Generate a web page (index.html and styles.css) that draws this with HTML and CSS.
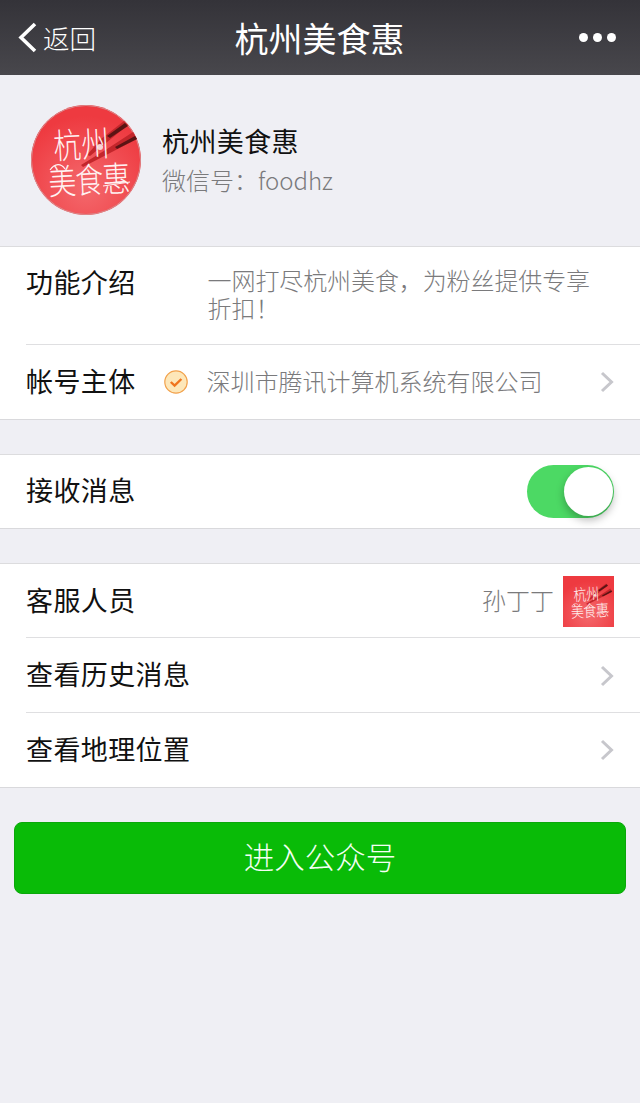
FILE: index.html
```html
<!DOCTYPE html>
<html lang="zh">
<head>
<meta charset="utf-8">
<title>杭州美食惠</title>
<link rel="stylesheet" href="styles.css">
</head>
<body>
<svg class="defs" width="0" height="0" aria-hidden="true">
  <defs>
    <radialGradient id="logoBg" cx="50%" cy="75%" r="65%">
      <stop offset="0" stop-color="#f4696d"/>
      <stop offset="1" stop-color="#ee3a40"/>
    </radialGradient>
    <symbol id="logoArt" viewBox="0 0 110 110">
      <path d="M97 20 L93 16 L70 34 L56 50 L59 51Z" fill="#c3262b"/>
      <path d="M106 34 L102 27 L76 44 L50 60 L52 62Z" fill="#c3262b"/>
      <path d="M97 21 L94 18 L76 31 L79 33Z" fill="#5a1414"/>
      <path d="M106 34 L104 31 L84 42 L86 44Z" fill="#5a1414"/>
      <circle cx="69" cy="42" r="3" fill="#f7d4d4"/>
      <text transform="translate(23 54) rotate(-3) scale(1 1.25)" class="logo-text logo-a">杭州</text>
      <text transform="translate(18 90) rotate(-3) scale(1 1.25)" class="logo-text logo-b">美食惠</text>
      <path d="M72 81 L99 77" class="logo-stroke"/>
      <path d="M19 65 C24 58 30 58 34 64" class="logo-stroke"/>
    </symbol>
  </defs>
</svg>
<header class="nav">
  <div class="nav-back">
    <svg class="back-icon" viewBox="0 0 20 32"><path d="M17 2 L3 15.5 L17 29" fill="none" stroke="#fff" stroke-width="3.6"/></svg>
    <span>返回</span>
  </div>
  <h1 class="nav-title">杭州美食惠</h1>
  <div class="nav-more"><i></i><i></i><i></i></div>
</header>
<section class="profile">
  <svg class="avatar" viewBox="0 0 110 110">
    <circle cx="55" cy="55" r="55" fill="url(#logoBg)"/>
    <circle cx="55" cy="55" r="54.5" fill="none" stroke="#d9898b" stroke-width="1"/>
    <use href="#logoArt" width="110" height="110"/>
  </svg>
  <div class="profile-text">
    <div class="profile-name">杭州美食惠</div>
    <div class="profile-id">微信号：foodhz</div>
  </div>
</section>
<section class="group">
  <div class="row row-intro">
    <span class="label">功能介绍</span>
    <p class="intro">一网打尽杭州美食，为粉丝提供专享折扣！</p>
  </div>
  <div class="row row-std">
    <span class="label">帐号主体</span>
    <svg class="verified" viewBox="0 0 24 24">
      <circle cx="12" cy="12" r="11.2" fill="#fde7b9" stroke="#f2a24d" stroke-width="1.2"/>
      <path d="M6.8 12 L10.6 15.6 L17.4 9" fill="none" stroke="#f0741e" stroke-width="2.4"/>
    </svg>
    <span class="value">深圳市腾讯计算机系统有限公司</span>
    <svg class="chevron" viewBox="0 0 14 22"><path d="M2 2 L11.5 11 L2 20" fill="none" stroke="#c7c7cc" stroke-width="3"/></svg>
  </div>
</section>
<section class="group">
  <div class="row row-single">
    <span class="label">接收消息</span>
    <div class="switch"><div class="knob"></div></div>
  </div>
</section>
<section class="group">
  <div class="row row-std">
    <span class="label">客服人员</span>
    <span class="staff">孙丁丁</span>
    <svg class="staff-pic" viewBox="0 0 110 110">
      <rect width="110" height="110" fill="url(#logoBg)"/>
      <use href="#logoArt" width="110" height="110"/>
    </svg>
  </div>
  <div class="row row-mid">
    <span class="label">查看历史消息</span>
    <svg class="chevron" viewBox="0 0 14 22"><path d="M2 2 L11.5 11 L2 20" fill="none" stroke="#c7c7cc" stroke-width="3"/></svg>
  </div>
  <div class="row row-std">
    <span class="label">查看地理位置</span>
    <svg class="chevron" viewBox="0 0 14 22"><path d="M2 2 L11.5 11 L2 20" fill="none" stroke="#c7c7cc" stroke-width="3"/></svg>
  </div>
</section>
<div class="action"><button class="enter" type="button">进入公众号</button></div>
</body>
</html>
```
FILE: styles.css
```css
* { box-sizing: border-box; }
html, body { margin: 0; padding: 0; }
body {
  width: 640px;
  height: 1103px;
  overflow: hidden;
  background: #efeff4;
  color: #111;
  font-family: "Noto Sans CJK SC", "Liberation Sans", sans-serif;
}
.defs { position: absolute; }
.nav {
  height: 75px;
  background: linear-gradient(#343339, #48474c);
  display: flex;
  align-items: center;
  justify-content: space-between;
  padding: 0 0 0 18px;
  position: relative;
  color: #fff;
}
.nav-back { display: flex; align-items: center; gap: 5px; font-size: 26.6px; font-weight: 300; }
.back-icon { width: 20px; height: 32px; }
.nav-title {
  position: absolute;
  left: -1px;
  right: 0;
  margin: 0;
  text-align: center;
  font-size: 34px;
  font-weight: 400;
  line-height: 75px;
}
.nav-more { display: flex; gap: 5px; padding-right: 24px; }
.nav-more i { width: 9px; height: 9px; border-radius: 50%; background: #fff; display: block; }
.profile {
  height: 171px;
  display: flex;
  align-items: flex-start;
  padding: 30px 0 0 31px;
  gap: 21px;
}
.avatar { width: 110px; height: 110px; flex: none; }
.logo-text { fill: #fff2f2; font-family: "Noto Sans CJK SC", sans-serif; font-weight: 300; }
.logo-a { font-size: 28px; }
.logo-b { font-size: 28px; letter-spacing: -1px; }
.logo-stroke { fill: none; stroke: #fff2f2; stroke-width: 1.2; }
.profile-text { padding-top: 18px; }
.profile-name { font-size: 27px; line-height: 36px; letter-spacing: 0.4px; }
.profile-id { font-size: 24px; line-height: 36px; margin-top: 3px; color: #7a7a7c; font-weight: 300; }
.group {
  background: #fff;
  border-top: 1px solid #dcdcde;
  border-bottom: 1px solid #d9d9dc;
  margin-bottom: 34px;
}
.row { display: flex; padding: 0 26px; position: relative; }
.row + .row::before {
  content: "";
  position: absolute;
  left: 26px;
  right: 0;
  top: -1px;
  height: 1px;
  background: #dfdfe1;
}
.row-std { align-items: center; height: 74px; }
.row-mid { align-items: center; height: 75px; }
.row-single { align-items: center; height: 73px; }
.row-intro { height: 98px; padding-top: 15px; align-items: flex-start; }
.label { font-size: 27px; line-height: 40px; padding-bottom: 3px; flex: none; box-sizing: content-box; letter-spacing: 0.4px; }
.row-intro .label { padding-bottom: 0; }
.intro {
  margin: 0 0 0 72px;
  font-size: 24px;
  line-height: 28px;
  color: #7a7a7c;
  width: 388px;
  font-weight: 300;
  position: relative;
  top: 4px;
  letter-spacing: -0.1px;
}
.verified { width: 24px; height: 24px; margin-left: 28px; flex: none; }
.value { font-size: 24px; margin-left: 19px; color: #7a7a7c; font-weight: 300; padding-bottom: 4px; }
.chevron { width: 14px; height: 22px; margin-left: auto; flex: none; }
.switch {
  margin-left: auto;
  width: 87px;
  height: 53px;
  border-radius: 27px;
  background: #4cd964;
  position: relative;
}
.knob {
  position: absolute;
  right: 1px;
  top: 2px;
  width: 49px;
  height: 49px;
  border-radius: 50%;
  background: #fff;
  box-shadow: 0 4px 8px rgba(0, 0, 0, 0.28);
}
.staff { margin-left: auto; font-size: 24px; color: #7a7a7c; font-weight: 300; padding-bottom: 4px; }
.staff-pic { width: 51px; height: 51px; margin-left: 9px; flex: none; }
.action { padding: 0 14px; }
.enter {
  display: block;
  width: 100%;
  height: 72px;
  padding: 0 0 4px;
  border: 1px solid #0aa80a;
  border-radius: 8px;
  background: #09bb07;
  color: #f4fff4;
  font: 300 30.5px "Noto Sans CJK SC", sans-serif;
}
```
